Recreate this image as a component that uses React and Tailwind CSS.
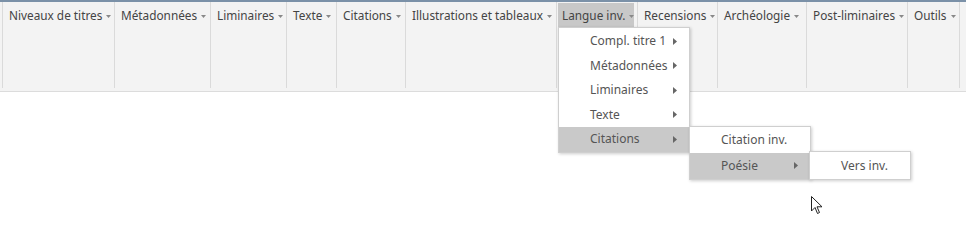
import React from "react";

const items = [
  ["Niveaux de titres", 112],
  ["Métadonnées", 96],
  ["Liminaires", 76],
  ["Texte", 50],
  ["Citations", 69],
  ["Illustrations et tableaux", 151],
  ["Langue inv.", 81],
  ["Recensions", 80],
  ["Archéologie", 89],
  ["Post-liminaires", 101],
  ["Outils", 52],
];

function Caret() {
  return (
    <svg width="5" height="3" viewBox="0 0 5 3" className="ml-[4px] mt-[1px] shrink-0">
      <path d="M0 0 L5 0 L2.5 3 Z" fill="#888" />
    </svg>
  );
}

function RightArrow() {
  return (
    <svg width="4" height="7" viewBox="0 0 4 7" className="shrink-0">
      <path d="M0 0 L4 3.5 L0 7 Z" fill="#666" />
    </svg>
  );
}

function MenuRow({ label, arrow, active }) {
  return (
    <div
      className={`flex items-center h-[24.5px] pl-[31px] pr-[12px] ${active ? "bg-[#c9c9c9]" : ""}`}
    >
      <span className="flex-1 text-[#555] whitespace-nowrap">{label}</span>
      {arrow && <RightArrow />}
    </div>
  );
}

export default function App() {
  return (
    <div
      className="relative w-[966px] h-[249px] bg-white overflow-hidden text-[12px]"
      style={{ fontFamily: '"Noto Sans", "Open Sans", sans-serif' }}
    >
      <div className="h-[2px] bg-[#7b91a8]" />
      <div className="flex h-[90px] bg-[#f3f3f3] border-b border-[#dcdcdc] pl-[2px] text-[11.8px]">
        <div className="w-[1px] h-[86px] bg-[#dadada]" />
        {items.map(([it, w]) => {
          const active = it === "Langue inv.";
          return (
            <div
              key={it}
              className="flex border-r border-[#dadada] h-[86px] shrink-0"
              style={{ width: w }}
            >
              {active ? (
                <div className="flex items-center h-[26px] mt-[1px] ml-[1px] pl-[4px] w-[76px] bg-[#c8c8c8] text-[#444] whitespace-nowrap">
                  {it}
                  <Caret />
                </div>
              ) : (
                <div className="flex items-center h-[26px] mt-[1px] pl-[6px] text-[#444] whitespace-nowrap">
                  {it}
                  <Caret />
                </div>
              )}
            </div>
          );
        })}
      </div>

      {/* Main dropdown */}
      <div className="absolute left-[558px] top-[27px] w-[132px] bg-white border border-[#cfcfcf] shadow-[1px_1px_3px_rgba(0,0,0,0.2)] pt-[1px]">
        <MenuRow label="Compl. titre 1" arrow />
        <MenuRow label="Métadonnées" arrow />
        <MenuRow label="Liminaires" arrow />
        <MenuRow label="Texte" arrow />
        <MenuRow label="Citations" arrow active />
      </div>

      {/* Submenu 1 */}
      <div className="absolute left-[689px] top-[126px] w-[122px] bg-white border border-[#cfcfcf] shadow-[1px_1px_3px_rgba(0,0,0,0.2)] pt-[1px]">
        <MenuRow label="Citation inv." />
        <div className="flex items-center h-[26px] pl-[31px] pr-[12px] bg-[#c9c9c9]">
          <span className="flex-1 text-[#555]">Poésie</span>
          <RightArrow />
        </div>
      </div>

      {/* Submenu 2 */}
      <div className="absolute left-[809px] top-[151px] w-[102px] h-[29px] bg-white border border-[#cfcfcf] shadow-[1px_1px_3px_rgba(0,0,0,0.2)] flex items-center pl-[31px]">
        <span className="text-[#555]">Vers inv.</span>
      </div>

      {/* Cursor */}
      <svg className="absolute left-[811px] top-[196px]" width="12" height="19" viewBox="0 0 12 19">
        <path d="M0.5 0.5 L0.5 15 L4 11.5 L6.5 17.5 L8.5 16.5 L6 10.8 L11 10.8 Z" fill="white" stroke="#222" strokeWidth="1" />
      </svg>
    </div>
  );
}
